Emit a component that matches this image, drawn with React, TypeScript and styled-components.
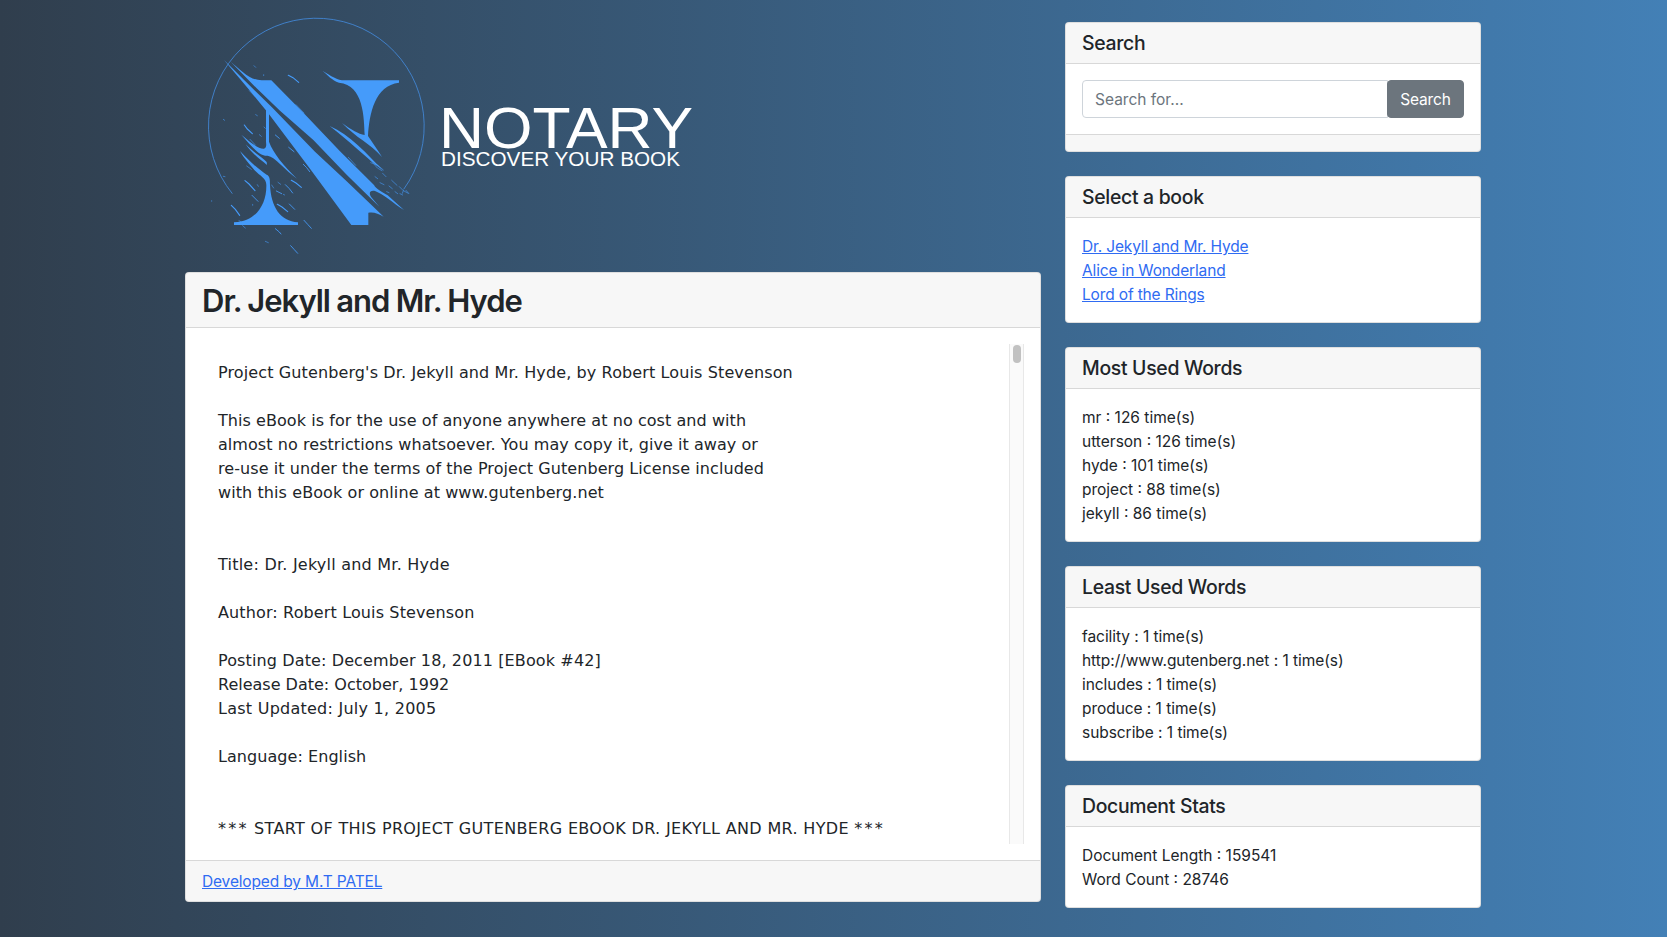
import React from 'react';
import styled, { createGlobalStyle } from 'styled-components';

const Global = createGlobalStyle`
  *, *::before, *::after { box-sizing: border-box; }
  html { height: 100%; }
  body {
    margin: 0;
    padding-right: 1px;
    min-height: 100%;
    overflow: hidden;
    font: 400 15.5px/24px Inter, "Liberation Sans", sans-serif;
    color: #212529;
    background: linear-gradient(to right, #303e4d 0%, #4380b6 100%);
  }
`;

const Container = styled.div`
  display: flex;
  width: 1320px;
  height: 937px;
  margin: 0 auto;
`;

const Column = styled.div<{ $width: number }>`
  width: ${p => p.$width}px;
  padding: 0 12px;
`;

const Sidebar = styled(Column)`
  display: flex;
  flex-direction: column;
  gap: 24px;
  padding-top: 22px;
`;

const Logo = styled.svg`
  display: block;
  margin: 10px 0 12px 15px;
`;

const Card = styled.section`
  border: 1px solid rgba(0, 0, 0, 0.125);
  border-radius: 4px;
  background: #fff;
  overflow: hidden;
`;

const CardHeader = styled.header`
  padding: 8px 16px;
  border-bottom: 1px solid rgba(0, 0, 0, 0.125);
  background: rgba(0, 0, 0, 0.03);
`;

const CardBody = styled.div`
  padding: 16px;
`;

const ListBody = styled(CardBody)`
  display: flex;
  flex-direction: column;
  align-items: flex-start;
  padding: 17px 16px 15px;
`;

const CardFooter = styled.footer`
  padding: 9px 16px 7px;
  border-top: 1px solid rgba(0, 0, 0, 0.125);
  background: rgba(0, 0, 0, 0.03);
`;

const BookTitle = styled.h2`
  margin: 0;
  padding-top: 2px;
  font-size: 31px;
  line-height: 36.4px;
  font-weight: 560;
  letter-spacing: -1px;
  word-spacing: -0.5px;
`;

const CardTitle = styled.h5`
  margin: 0;
  font-size: 19.4px;
  line-height: 24px;
  font-weight: 500;
  letter-spacing: -0.3px;
`;

const Line = styled.span<{ $track?: number }>`
  letter-spacing: ${p => p.$track ?? 0}px;
`;

const Stars = styled.span`
  letter-spacing: 2.2px;
`;

const Link = styled.a`
  color: #2f6bf2;
  letter-spacing: -0.15px;
  text-decoration: underline;
`;

const Reader = styled.div`
  display: flex;
  height: 500px;
`;

const BookText = styled.pre`
  flex: 1;
  margin: 0;
  padding: 17px 16px 0;
  overflow: hidden;
  font: 400 16px/24px "DejaVu Sans", sans-serif;
`;

const ScrollTrack = styled.div`
  width: 15px;
  padding: 1px 2px 0 3px;
  border: solid #e8e8e8;
  border-width: 0 1px;
  background: #fafafa;
`;

const ScrollThumb = styled.div`
  width: 8px;
  height: 18px;
  border-radius: 4px;
  background: #c1c1c1;
`;

const SearchGroup = styled.div`
  display: flex;
`;

const SearchInput = styled.input`
  flex: 1;
  min-width: 0;
  height: 38px;
  padding: 6px 12px;
  border: 1px solid #ced4da;
  border-radius: 4px 0 0 4px;
  font: inherit;
  &::placeholder { color: #6c757d; opacity: 1; }
`;

const SearchButton = styled.button`
  width: 77px;
  height: 38px;
  margin-left: -1px;
  padding: 7px 0 5px;
  border: 1px solid #6c757d;
  border-radius: 4px;
  background: #6c757d;
  color: #fff;
  font: inherit;
  letter-spacing: -0.15px;
`;

const EXCERPT: [string, number][] = [
  ["Project Gutenberg's Dr. Jekyll and Mr. Hyde, by Robert Louis Stevenson", 0.12],
  ['', 0],
  ['This eBook is for the use of anyone anywhere at no cost and with', 0.06],
  ['almost no restrictions whatsoever. You may copy it, give it away or', 0.06],
  ['re-use it under the terms of the Project Gutenberg License included', 0.07],
  ['with this eBook or online at www.gutenberg.net', 0.09],
  ['', 0],
  ['', 0],
  ['Title: Dr. Jekyll and Mr. Hyde', 0.23],
  ['', 0],
  ['Author: Robert Louis Stevenson', 0.13],
  ['', 0],
  ['Posting Date: December 18, 2011 [EBook #42]', 0.12],
  ['Release Date: October, 1992', 0],
  ['Last Updated: July 1, 2005', 0.25],
  ['', 0],
  ['Language: English', 0.06],
  ['', 0],
  ['', 0],
  ['*** START OF THIS PROJECT GUTENBERG EBOOK DR. JEKYLL AND MR. HYDE ***', 0.34],
];

const BOOKS = ['Dr. Jekyll and Mr. Hyde', 'Alice in Wonderland', 'Lord of the Rings'];

const PANELS = [
  {
    title: 'Most Used Words',
    track: 0,
    lines: ['mr : 126 time(s)', 'utterson : 126 time(s)', 'hyde : 101 time(s)', 'project : 88 time(s)', 'jekyll : 86 time(s)'],
  },
  {
    title: 'Least Used Words',
    track: -0.05,
    lines: ['facility : 1 time(s)', 'http://www.gutenberg.net : 1 time(s)', 'includes : 1 time(s)', 'produce : 1 time(s)', 'subscribe : 1 time(s)'],
  },
  { title: 'Document Stats', track: 0, lines: ['Document Length : 159541', 'Word Count : 28746'] },
];

function NotaryLogo() {
  return (
    <Logo width="520" height="250" viewBox="0 0 1560 750">
      <path d="M97 551A323.5 323.5 0 1 1 611 538" fill="none" stroke="#4288d8" strokeWidth="2.6" />
      <g fill="#459bfa">
        <path d="M92 155C122 180 150 211 185 211H214L310 308L420 424L522 525C528 537 545 545 563 556L612 600C580 580 550 552 525 543C508 540 506 550 514 562L538 590L440 494L340 390L240 302L170 235Z" />
        <path d="M72 150L130 208L215 291L345 425L440 514L520 590L551 620C535 610 520 605 505 608V645H454L330 476L202 306L148 240Z" />
        <path d="M367 182C395 198 410 211 435 211H597V218C525 226 508 310 504 378C515 395 532 418 546 441C510 400 470 385 426 339C455 360 475 372 494 375C492 325 492 225 417 218C395 210 385 197 367 182Z" />
        <path d="M389 348C450 375 500 430 550 482C500 445 445 390 389 348Z" />
        <path d="M198 300H207V395C220 430 250 466 291 506C255 480 225 440 203 437C180 440 155 410 124 374C155 400 175 417 192 416C200 414 199 405 198 395Z" />
        <path d="M137 403C160 427 185 440 200 456L201 465C180 448 155 430 137 403Z" />
        <path d="M120 423C150 455 175 478 200 494C210 498 210 510 210 525C213 590 240 634 294 637V645H102V637C170 636 200 580 199 525C199 504 180 498 163 480C147 460 132 446 120 423Z" />
      </g>
      <g stroke="#459bfa" strokeLinecap="round" fill="none">
        <path
          strokeWidth="3.4"
          d="M265 196l14 7l17 14M133 345l9 12l15 14M135 512l12 10l18 20M94 586l12 12l13 18M274 511l14 8l16 13M232 583l14 8l17 14"
        />
        <path
          strokeWidth="2.6"
          d="M312 631l11 12l11 12M226 656l12 10l5 6M272 707l11 12l10 11M256 524l12 12l10 13M310 463l10 10l9 12M226 375l12 10M266 412l16 13M156 556l18 18M229 543l16 8M268 582l16 16"
        />
        <path
          strokeWidth="1.8"
          d="M162 167l5 5M191 194v3M70 328l4 3M167 314l5 3M192 351l4 4M140 468l14 10M234 517l8 6M215 525l6 9M158 583v3M117 632l6 3M128 647l8 7M196 694l9 4M35 572v2M150 388l16 17M70 499l5 1M178 374l6 5M250 553l4 2M172 524l3 5M288 284l24 25M148 242l18 18M445 442l22 24M512 450l8 10l12 14l14 8M512 458l22 8l16 14M548 490l10 10M575 511l16 15M598 530l12 12l15 8M610 542l-3 8M525 500l8 6M540 518l12 6M567 528l10 8M560 545l7 3M585 545l8 6M600 551l8 4M618 541l8 9"
        />
      </g>
      <g fill="#fff" fontFamily='"Liberation Sans", Arial, sans-serif'>
        <text x="717" y="414" fontSize="170" textLength="762" lengthAdjust="spacingAndGlyphs">NOTARY</text>
        <text x="723" y="467" fontSize="58" textLength="717" lengthAdjust="spacingAndGlyphs">DISCOVER YOUR BOOK</text>
      </g>
    </Logo>
  );
}

export default function App() {
  return (
    <>
      <Global />
      <Container>
        <Column $width={880}>
          <NotaryLogo />
          <Card>
            <CardHeader><BookTitle>Dr. Jekyll and Mr. Hyde</BookTitle></CardHeader>
            <CardBody>
              <Reader>
                <BookText>
                  {EXCERPT.map(([text, track], i) => (
                    <Line key={i} $track={track}>
                      {text.split(/(\*{3})/).map((part, j) =>
                        part === '***' ? <Stars key={j}>{part}</Stars> : part,
                      )}
                      {'\n'}
                    </Line>
                  ))}
                </BookText>
                <ScrollTrack><ScrollThumb /></ScrollTrack>
              </Reader>
            </CardBody>
            <CardFooter><Link>Developed by M.T PATEL</Link></CardFooter>
          </Card>
        </Column>
        <Sidebar $width={440}>
          <Card>
            <CardHeader><CardTitle>Search</CardTitle></CardHeader>
            <CardBody>
              <SearchGroup>
                <SearchInput placeholder="Search for..." />
                <SearchButton>Search</SearchButton>
              </SearchGroup>
            </CardBody>
            <CardFooter />
          </Card>
          <Card>
            <CardHeader><CardTitle>Select a book</CardTitle></CardHeader>
            <ListBody>{BOOKS.map(b => <Link key={b}>{b}</Link>)}</ListBody>
          </Card>
          {PANELS.map(p => (
            <Card key={p.title}>
              <CardHeader><CardTitle>{p.title}</CardTitle></CardHeader>
              <ListBody>{p.lines.map(l => <Line key={l} $track={p.track}>{l}</Line>)}</ListBody>
            </Card>
          ))}
        </Sidebar>
      </Container>
    </>
  );
}
